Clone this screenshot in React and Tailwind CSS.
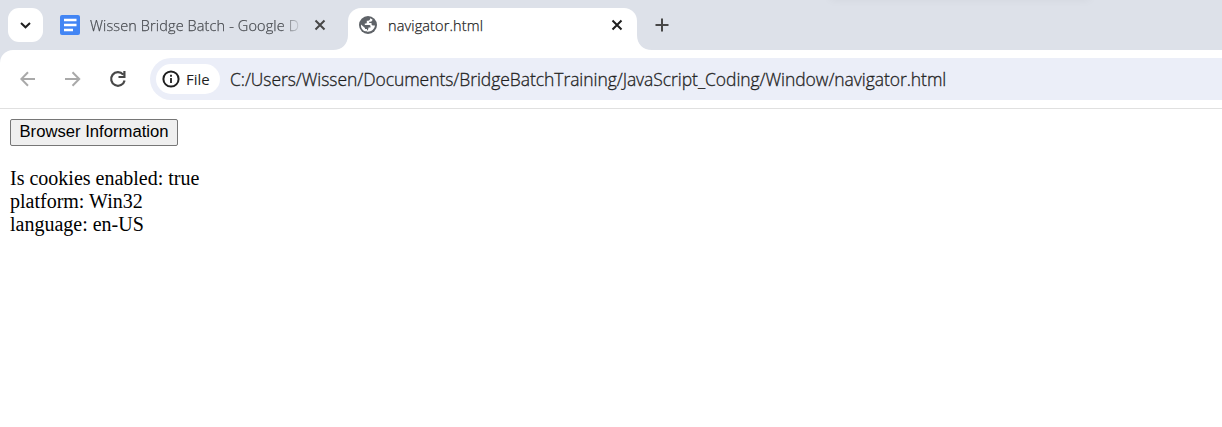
const CloseIcon = ({ className }) => (
  <svg className={className} width="12" height="12" viewBox="0 0 12 12" fill="none" stroke="currentColor" strokeWidth="2">
    <path d="M1.5 1.5 10.5 10.5M10.5 1.5 1.5 10.5" />
  </svg>
);

const DocsIcon = () => (
  <svg className="shrink-0" width="20" height="20" viewBox="0 0 20 20">
    <rect width="20" height="20" rx="2" fill="#4285f4" />
    <path d="M4 5h12.500M4 10h12.500M4 15h9" stroke="#fff" strokeWidth="2.300" />
  </svg>
);

const GlobeIcon = () => (
  <svg className="shrink-0" width="18" height="18" viewBox="0 0 18 18">
    <circle cx="9" cy="9" r="9" fill="#5f6368" />
    <path
      d="M11.200 2.200C11.200 4.200 10 4.800 7.800 4.800V6.500C7.800 7.500 7 7.500 5.800 7.500V9H10.500C11.500 9 11.500 10 11.500 11.500H9.500C9.500 13.500 8.500 14.500 7 15.500 11.500 16.500 15.500 13.500 16 9.500H14C12.500 9.500 12.500 8.500 12.500 7H10.200V5.800C11.500 5.800 13.500 5.500 13.500 3.500zM2 8.500 6 12V13H8V15.500C4 15.500 1.500 12 2 8.500z"
      fill="#fff"
    />
  </svg>
);

const Flare = ({ left }) => (
  <svg className={left ? "shrink-0 self-end" : "shrink-0 self-end -scale-x-100"} width="15" height="15" viewBox="0 0 15 15">
    <path d="M15 0v15H0C9 15 15 9 15 0z" fill="#fff" />
  </svg>
);

export default function App() {
  return (
    <div className="h-[427px] w-[1222px] overflow-hidden bg-white font-['Open_Sans',sans-serif] text-[#1f1f1f]">
      <div className="bg-[#dde1e9]">
        <div className="relative flex h-[50px] pl-2">
          <div className="absolute -top-3 left-[830px] h-3 w-[260px] shadow-[0_0_10px_#0000000c]" />
          <button className="mt-2 flex h-[34px] w-[35px] shrink-0 items-center justify-center rounded-[11px] bg-white">
            <svg width="11" height="7" viewBox="0 0 11 7" fill="none" stroke="#1f1f1f" strokeWidth="2">
              <path d="M1 1l4.500 4.300L10 1" />
            </svg>
          </button>
          <div className="flex h-[50px] w-[290px] items-center pl-[17px]">
            <DocsIcon />
            <div className="ml-[10px] w-[210px] whitespace-nowrap bg-linear-to-r from-[#45484d] from-91% to-[#45484d]/10 bg-clip-text pt-0.5 text-[14.5px] font-light leading-5 tracking-[0.12px] text-transparent [-webkit-text-stroke:0.25px_transparent]">
              Wissen Bridge Batch - Google D
            </div>
            <CloseIcon className="ml-[14px] shrink-0 text-[#474747]" />
          </div>
          <Flare left />
          <div className="mt-2 flex h-[42px] w-[289px] shrink-0 items-center rounded-t-[13px] bg-white pb-2 pl-[11px]">
            <GlobeIcon />
            <span className="ml-[11px] w-[223px] pt-0.5 text-[14.5px] font-light leading-5 tracking-[0.12px] [-webkit-text-stroke:0.25px_#1f1f1f]">navigator.html</span>
            <CloseIcon />
          </div>
          <Flare />
          <svg className="mt-[18px] ml-[3px] shrink-0" width="14" height="14" viewBox="0 0 14 14" stroke="#474747" strokeWidth="2">
            <path d="M7 .5v13M.5 7h13" />
          </svg>
        </div>
        <div className="flex h-[59px] items-start rounded-tl-[13px] border-b border-[#e0e0e0] bg-white pt-2">
          <div className="flex h-[42px] w-[150px] shrink-0 items-center pl-5">
            <svg width="16" height="16" viewBox="0 0 16 16" fill="none" stroke="#a9a9a9" strokeWidth="2">
              <path d="M15 8H2M8 1.300 1.300 8 8 14.700" />
            </svg>
            <svg className="ml-[29px]" width="16" height="16" viewBox="0 0 16 16" fill="none" stroke="#a9a9a9" strokeWidth="2">
              <path d="M0 8h13.500M7.500 1.300 14.200 8l-6.700 6.700" />
            </svg>
            <svg className="ml-[28px]" width="18" height="18" viewBox="0 0 18 18" fill="none" stroke="#474747" strokeWidth="2.200">
              <path d="M14.200 4.600A6.800 6.800 0 1 0 15.600 10.500M15.400 1v6H9.500" />
            </svg>
          </div>
          <div className="flex h-[42px] grow items-center rounded-l-full bg-[#ebeef8] pl-1.5">
            <div className="flex h-[30px] w-16 items-center rounded-full bg-white pl-1.5">
              <svg width="18" height="18" viewBox="0 0 18 18" fill="none" stroke="#1f1f1f" strokeWidth="2">
                <circle cx="9" cy="9" r="7.600" />
                <path d="M9 8v5M9 4.800v2" strokeWidth="1.800" />
              </svg>
              <span className="ml-[6px] text-[15px] leading-5">File</span>
            </div>
            <span className="ml-[10px] whitespace-nowrap text-[17.5px] font-light leading-6 tracking-[-0.055px] [-webkit-text-stroke:0.3px_#1f1f1f]">
              C:/Users/Wissen/Documents/BridgeBatchTraining/JavaScript_Coding/Window/navigator.html
            </span>
          </div>
        </div>
      </div>
      <main className="px-[10px] pt-[10px] text-black">
        <button className="flex h-[27px] w-[168px] items-center justify-center rounded-[2px] border border-[#767676] bg-[#efefef] pb-0.5 font-['Liberation_Sans',sans-serif] text-[16.667px] leading-5">
          Browser Information
        </button>
        <p className="mt-[21px] font-['Liberation_Serif',serif] text-[20px] leading-[23px]">
          Is cookies enabled: true
          <br />
          platform: Win32
          <br />
          language: en-US
        </p>
      </main>
    </div>
  );
}
